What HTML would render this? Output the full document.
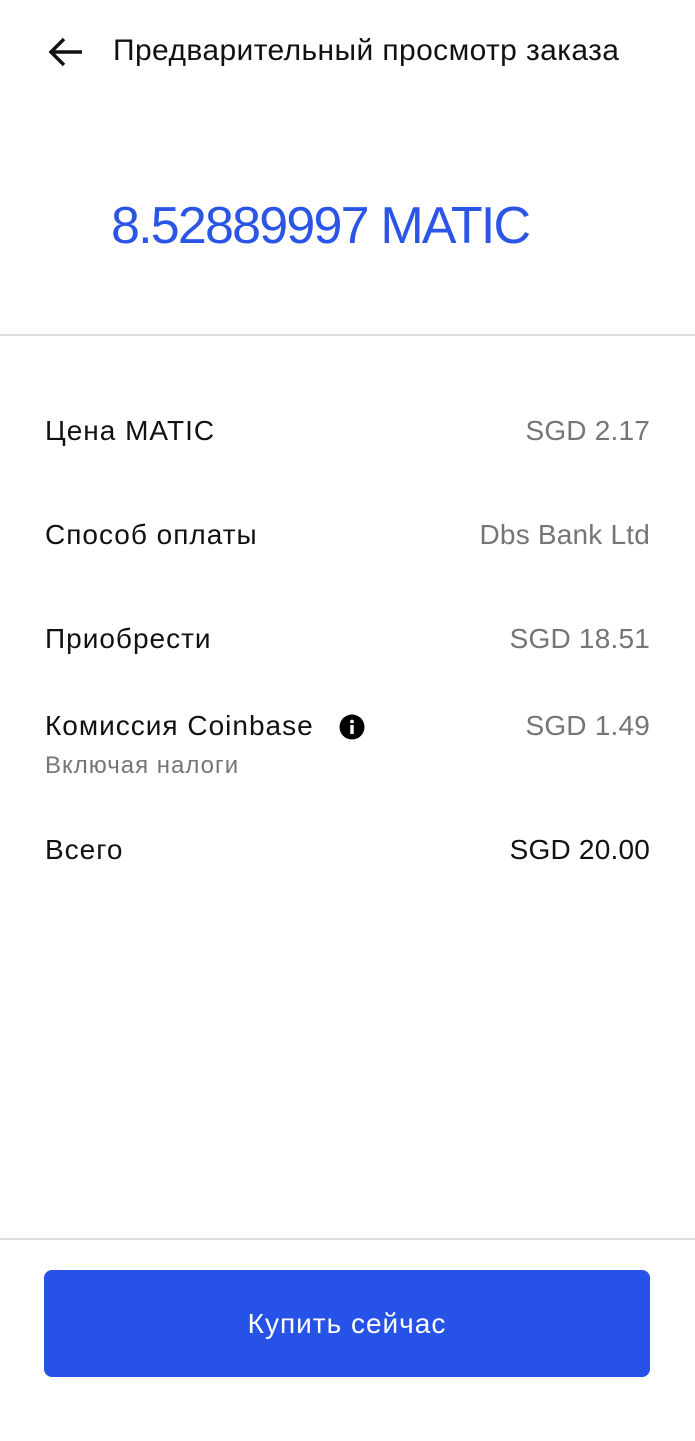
<!DOCTYPE html>
<html><head><meta charset="utf-8"><style>
body{margin:0;width:695px;height:1441px;background:#fff;font-family:"Liberation Sans","Noto Sans CJK JP",sans-serif;position:relative;overflow:hidden;color:#111}
.a{position:absolute;white-space:nowrap}
.l{left:45px;font-size:28px;letter-spacing:1px;color:#111}
.r{right:45px;font-size:28px;letter-spacing:0.2px;color:#757575;text-align:right}
</style></head><body>
<svg class="a" style="left:48px;top:36px" width="36" height="32" viewBox="0 0 36 32"><path d="M16 3 L3 16 L16 29 M3 16 H34" fill="none" stroke="#111" stroke-width="3.5"/></svg>
<div class="a" style="left:113px;top:34px;font-size:30px;letter-spacing:0.4px;color:#111">Предварительный просмотр заказа</div>
<div class="a" style="left:111px;top:196px;font-size:52px;letter-spacing:-1.8px;color:#2b55e6">8.52889997 MATIC</div>
<div class="a" style="left:0;top:334px;width:695px;height:2px;background:#ddd"></div>
<div class="a l" style="top:415px">Цена MATIC</div><div class="a r" style="top:415px">SGD 2.17</div>
<div class="a l" style="top:519px">Способ оплаты</div><div class="a r" style="top:519px">Dbs Bank Ltd</div>
<div class="a l" style="top:623px">Приобрести</div><div class="a r" style="top:623px">SGD 18.51</div>
<div class="a l" style="top:710px">Комиссия Coinbase</div>
<svg class="a" style="left:339px;top:714px" width="26" height="26" viewBox="0 0 26 26"><circle cx="13" cy="13" r="12.5" fill="#000"/><rect x="11.3" y="11" width="3.4" height="9" fill="#fff"/><circle cx="13" cy="7.5" r="1.9" fill="#fff"/></svg>
<div class="a r" style="top:710px">SGD 1.49</div>
<div class="a" style="left:45px;top:752px;font-size:24px;letter-spacing:1px;color:#757575">Включая налоги</div>
<div class="a l" style="top:834px">Всего</div><div class="a r" style="top:834px;color:#111">SGD 20.00</div>
<div class="a" style="left:0;top:1238px;width:695px;height:2px;background:#ddd"></div>
<div class="a" style="left:44px;top:1270px;width:606px;height:107px;background:#2752e7;border-radius:8px;color:#fff;font-size:28px;letter-spacing:1px;text-align:center;line-height:107px">Купить сейчас</div>
</body></html>
